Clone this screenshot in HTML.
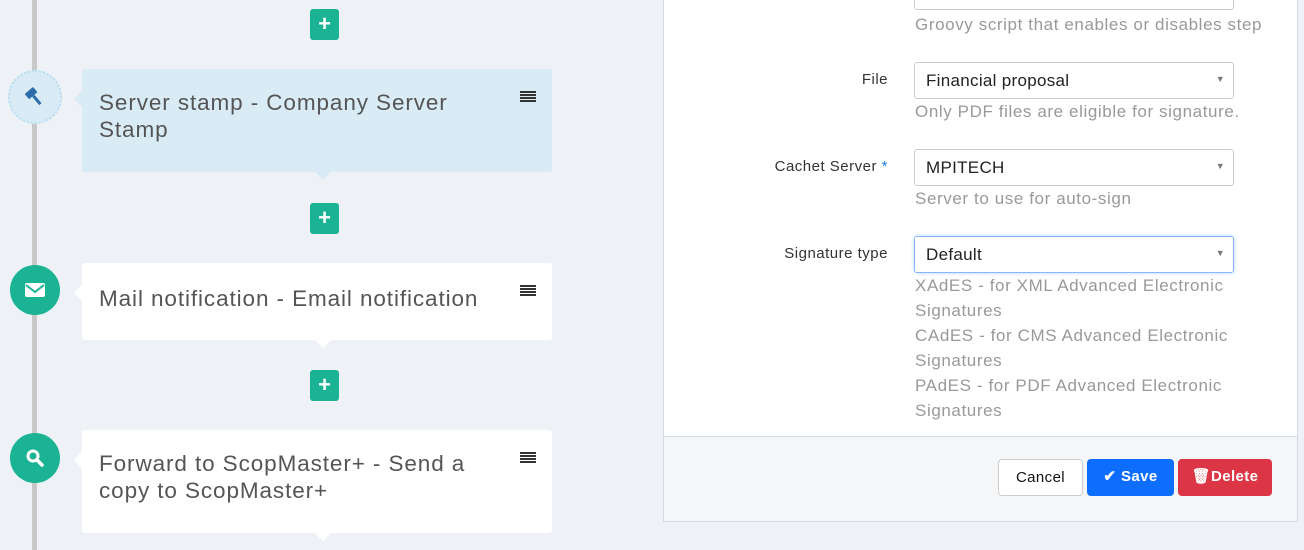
<!DOCTYPE html>
<html><head><style>
*{box-sizing:border-box;margin:0;padding:0}
body{width:1304px;height:550px;overflow:hidden;background:#eef2f7;font-family:"Liberation Sans",sans-serif;position:relative}
.line{position:absolute;left:32px;top:0;width:5px;height:550px;background:#c8c8c8}
.plus{position:absolute;left:310px;width:29px;height:31px;background:#1ab394;border-radius:3px;color:#fff;font-weight:bold;font-size:22px;text-align:center;line-height:30px}
.card{position:absolute;left:82px;width:470px;background:#fff;border-radius:3px;color:#555;font-size:22.5px;letter-spacing:0.9px;line-height:27px;padding:20px 60px 0 17px}
.card.blue{background:#d9ecf6}
.card:before{content:"";position:absolute;left:-8px;top:22px;border:8px solid transparent;border-left:0;border-right-color:inherit}
.card .menu{position:absolute;right:16px;top:22px;width:16px;height:11px;background:repeating-linear-gradient(#333 0 2px,transparent 2px 3px)}
.card .arr{position:absolute;left:233px;bottom:-8px;border:8px solid transparent;border-bottom:0}
.circ{position:absolute;left:10px;width:50px;height:50px;border-radius:50%;background:#1ab394;color:#fff;display:flex;align-items:center;justify-content:center}
.panel{position:absolute;left:663px;top:-2px;width:635px;height:524px;background:#fff;border:1px solid #d5dbe5}
.foot{position:absolute;left:0;right:0;top:437px;bottom:0;background:#f5f6f8;border-top:1px solid #d5dbe5}
.lbl{position:absolute;right:409px;font-size:15px;letter-spacing:0.5px;color:#333;text-align:right}
.sel{position:absolute;left:250px;width:320px;height:37px;border:1px solid #ccc;border-radius:3px;font-size:17px;letter-spacing:0.3px;color:#222;padding:8px 11px}
.sel:after{content:"▼";position:absolute;right:8px;top:11px;font-size:9px;color:#777}
.help{position:absolute;left:251px;font-size:17px;letter-spacing:0.6px;color:#999;line-height:25px}
.btn{position:absolute;top:459px;height:37px;border-radius:4px;font-size:15px;letter-spacing:0.4px;text-align:center;line-height:36px;font-weight:bold}
</style></head><body>
<div class="line"></div>
<div class="plus" style="top:9px">+</div>
<div class="plus" style="top:203px">+</div>
<div class="plus" style="top:370px">+</div>

<div class="circ" style="top:70px;left:8px;width:54px;height:54px;background:#d9ecf6;border:2px dotted #b8def0">
<svg width="24" height="24" viewBox="0 0 24 24"><g fill="#2d6ea8" transform="rotate(-40 12 12)"><rect x="6" y="3" width="11" height="7" rx="1"/><rect x="10" y="10" width="3" height="11"/></g></svg></div>
<div class="card blue" style="top:69px;height:103px;border-color:#d9ecf6">Server stamp - Company Server Stamp<div class="menu"></div><div class="arr" style="border-top-color:#d9ecf6"></div></div>

<div class="circ" style="top:265px"><svg width="22" height="16" viewBox="0 0 22 16"><rect x="1" y="1" width="20" height="14" rx="2" fill="#fff"/><path d="M2 3l9 7 9-7" stroke="#1ab394" stroke-width="2" fill="none"/></svg></div>
<div class="card" style="top:263px;height:77px;border-color:#fff;padding-top:22px">Mail notification - Email notification<div class="menu"></div><div class="arr" style="border-top-color:#fff"></div></div>

<div class="circ" style="top:433px"><svg width="20" height="20" viewBox="0 0 20 20"><circle cx="8" cy="8" r="5" stroke="#fff" stroke-width="3" fill="none"/><path d="M12 12l5 5" stroke="#fff" stroke-width="3.5" stroke-linecap="round"/></svg></div>
<div class="card" style="top:430px;height:103px;border-color:#fff">Forward to ScopMaster+ - Send a copy to ScopMaster+<div class="menu"></div><div class="arr" style="border-top-color:#fff"></div></div>

<div class="panel">
<div class="sel" style="top:-26px"></div>
<div class="help" style="top:13px">Groovy script that enables or disables step</div>
<div class="lbl" style="top:72px">File</div>
<div class="sel" style="top:63px">Financial proposal</div>
<div class="help" style="top:100px">Only PDF files are eligible for signature.</div>
<div class="lbl" style="top:159px">Cachet Server <span style="color:#1c7ed6">*</span></div>
<div class="sel" style="top:150px">MPITECH</div>
<div class="help" style="top:187px">Server to use for auto-sign</div>
<div class="lbl" style="top:246px">Signature type</div>
<div class="sel" style="top:237px;border-color:#86b7fe;box-shadow:0 0 4px #b8d6ff">Default</div>
<div class="help" style="top:274px">XAdES - for XML Advanced Electronic<br>Signatures<br>CAdES - for CMS Advanced Electronic<br>Signatures<br>PAdES - for PDF Advanced Electronic<br>Signatures</div>
<div class="foot"></div>
</div>
<div class="btn" style="left:998px;width:85px;background:#fff;border:1px solid #ccc;color:#111;font-weight:normal">Cancel</div>
<div class="btn" style="left:1087px;width:87px;background:#0d6efd;color:#fff">✔ Save</div>
<div class="btn" style="left:1178px;width:94px;background:#dc3545;color:#fff">🗑Delete</div>
</body></html>
